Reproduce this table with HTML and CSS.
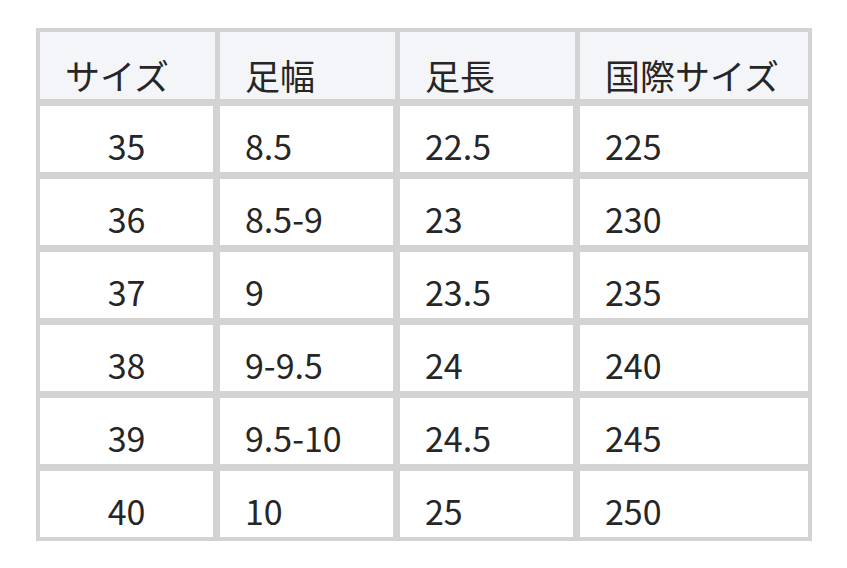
FILE: index.html
```html
<!DOCTYPE html>
<html lang="ja">
<head>
<meta charset="utf-8">
<title>サイズ表</title>
<link rel="stylesheet" href="styles.css">
</head>
<body>
<div class="page">
  <table class="size-table">
    <thead>
      <tr>
        <th class="c1">サイズ</th>
        <th class="c2">足幅</th>
        <th class="c3">足長</th>
        <th class="c4">国際サイズ</th>
      </tr>
    </thead>
    <tbody>
      <tr><td class="num">35</td><td>8.5</td><td>22.5</td><td>225</td></tr>
      <tr><td class="num">36</td><td>8.5-9</td><td>23</td><td>230</td></tr>
      <tr><td class="num">37</td><td>9</td><td>23.5</td><td>235</td></tr>
      <tr><td class="num">38</td><td>9-9.5</td><td>24</td><td>240</td></tr>
      <tr><td class="num">39</td><td>9.5-10</td><td>24.5</td><td>245</td></tr>
      <tr><td class="num">40</td><td>10</td><td>25</td><td>250</td></tr>
    </tbody>
  </table>
</div>
</body>
</html>
```
FILE: styles.css
```css
html, body {
  margin: 0;
  padding: 0;
  background: #ffffff;
}

.page {
  padding: 28px 36px;
}

.size-table {
  border-collapse: separate;
  border-spacing: 0;
  table-layout: fixed;
  width: 776px;
  border: 4px solid #d3d3d3;
  font-family: "Noto Sans CJK JP", "Noto Sans", sans-serif;
  font-size: 34px;
  line-height: 40px;
  color: #262626;
}

.size-table th,
.size-table td {
  box-sizing: border-box;
  text-align: left;
  font-weight: 400;
  white-space: nowrap;
}

.size-table th {
  background: #f4f5f9;
  font-size: 35px;
  padding: 23px 24px 4px 25px;
  height: 74px;
  border-right: 5px solid #d3d3d3;
  border-bottom: 7px solid #d3d3d3;
}

.size-table .c1,
.size-table .c2,
.size-table .c3 {
  width: 180px;
}

.size-table .c4 {
  width: 228px;
}

.size-table td {
  padding: 20px 24px 6px 25px;
  height: 73px;
  border-right: 7px solid #d3d3d3;
  border-bottom: 7px solid #d3d3d3;
}

.size-table td.num {
  text-align: center;
  padding-left: 24px;
  padding-right: 24px;
}

.size-table th:last-child,
.size-table td:last-child {
  border-right: 0;
}

.size-table tbody tr:last-child td {
  border-bottom: 0;
  height: 66px;
}
```
